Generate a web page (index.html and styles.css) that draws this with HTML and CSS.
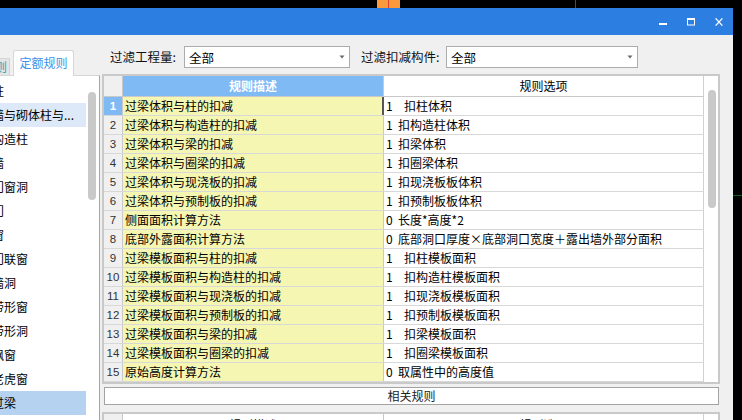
FILE: index.html
```html
<!DOCTYPE html>
<html lang="zh">
<head>
<meta charset="utf-8">
<title>规则</title>
<link rel="stylesheet" href="styles.css">
</head>
<body>
<div class="screen">
  <div class="topbar"><span class="marker"></span><span class="gline"></span></div>
  <div class="main">
    <div class="window">
      <div class="titlebar">
        <div class="ctl"><svg viewBox="0 0 8 8"><rect x="0" y="5" width="8" height="2" fill="#fff"/></svg></div>
        <div class="ctl"><svg viewBox="0 0 8 8"><rect x="0.5" y="0.5" width="7" height="6.5" fill="none" stroke="#fff"/><rect x="0" y="0" width="8" height="2" fill="#fff"/></svg></div>
        <div class="ctl"><svg viewBox="0 0 8 8"><path d="M0.6 0.4L7.4 7.6M7.4 0.4L0.6 7.6" stroke="#fff" stroke-width="1.3" fill="none"/></svg></div>
      </div>
      <div class="content">
        <div class="leftcol">
          <div class="tabs">
            <div class="tab-ghost"><span>则</span></div>
            <div class="tab-active">定额规则</div>
          </div>
          <div class="panel">
            <div class="tree">
              <ul>
                <li>柱</li>
                <li class="hover">墙与砌体柱与...</li>
                <li>构造柱</li>
                <li>墙</li>
                <li>门窗洞</li>
                <li>门</li>
                <li>窗</li>
                <li>门联窗</li>
                <li>墙洞</li>
                <li>带形窗</li>
                <li>带形洞</li>
                <li>飘窗</li>
                <li>老虎窗</li>
                <li class="sel">过梁</li>
              </ul>
            </div>
            <div class="vscroll"><div class="thumb"></div></div>
          </div>
        </div>
        <div class="rightcol">
          <div class="filters">
            <span class="flabel l1">过滤工程量:</span>
            <div class="combo c1"><span>全部</span><svg class="arrow" viewBox="0 0 6 4"><path d="M0.5 0.5H5.5L3 3.5Z" fill="#6a6a6a"/></svg></div>
            <span class="flabel l2">过滤扣减构件:</span>
            <div class="combo c2"><span>全部</span><svg class="arrow" viewBox="0 0 6 4"><path d="M0.5 0.5H5.5L3 3.5Z" fill="#6a6a6a"/></svg></div>
          </div>
          <div class="grid">
            <div class="gbody">
              <div class="hrow"><div class="hnum"></div><div class="hdesc">规则描述</div><div class="hopt">规则选项</div></div>
              <div class="row"><div class="num cur">1</div><div class="desc focus">过梁体积与柱的扣减</div><div class="opt"><span class="code w">1</span>扣柱体积</div></div>
              <div class="row"><div class="num">2</div><div class="desc">过梁体积与构造柱的扣减</div><div class="opt"><span class="code">1</span>扣构造柱体积</div></div>
              <div class="row"><div class="num">3</div><div class="desc">过梁体积与梁的扣减</div><div class="opt"><span class="code">1</span>扣梁体积</div></div>
              <div class="row"><div class="num">4</div><div class="desc">过梁体积与圈梁的扣减</div><div class="opt"><span class="code">1</span>扣圈梁体积</div></div>
              <div class="row"><div class="num">5</div><div class="desc">过梁体积与现浇板的扣减</div><div class="opt"><span class="code">1</span>扣现浇板板体积</div></div>
              <div class="row"><div class="num">6</div><div class="desc">过梁体积与预制板的扣减</div><div class="opt"><span class="code">1</span>扣预制板板体积</div></div>
              <div class="row"><div class="num">7</div><div class="desc">侧面面积计算方法</div><div class="opt"><span class="code">0</span>长度*高度*2</div></div>
              <div class="row"><div class="num">8</div><div class="desc">底部外露面积计算方法</div><div class="opt"><span class="code">0</span>底部洞口厚度×底部洞口宽度＋露出墙外部分面积</div></div>
              <div class="row"><div class="num">9</div><div class="desc">过梁模板面积与柱的扣减</div><div class="opt"><span class="code w">1</span>扣柱模板面积</div></div>
              <div class="row"><div class="num">10</div><div class="desc">过梁模板面积与构造柱的扣减</div><div class="opt"><span class="code w">1</span>扣构造柱模板面积</div></div>
              <div class="row"><div class="num">11</div><div class="desc">过梁模板面积与现浇板的扣减</div><div class="opt"><span class="code w">1</span>扣现浇板模板面积</div></div>
              <div class="row"><div class="num">12</div><div class="desc">过梁模板面积与预制板的扣减</div><div class="opt"><span class="code w">1</span>扣预制板模板面积</div></div>
              <div class="row"><div class="num">13</div><div class="desc">过梁模板面积与梁的扣减</div><div class="opt"><span class="code w">1</span>扣梁模板面积</div></div>
              <div class="row"><div class="num">14</div><div class="desc">过梁模板面积与圈梁的扣减</div><div class="opt"><span class="code w">1</span>扣圈梁模板面积</div></div>
              <div class="row"><div class="num">15</div><div class="desc">原始高度计算方法</div><div class="opt"><span class="code">0</span>取属性中的高度值</div></div>
            </div>
            <div class="gscroll"><div class="thumb"></div></div>
          </div>
          <div class="related">相关规则</div>
          <div class="grid grid2">
            <div class="gbody">
              <div class="hrow"><div class="hnum"></div><div class="hdesc plain">规则描述</div><div class="hopt">规则选项</div></div>
            </div>
            <div class="gscroll"></div>
          </div>
        </div>
      </div>
    </div>
    <div class="edge"><span class="eline"></span></div>
  </div>
</div>
</body>
</html>
```

FILE: styles.css
```css
* { box-sizing: border-box; }
html, body { margin: 0; padding: 0; }
body {
  background: #000;
  font-family: "Noto Sans CJK SC", sans-serif;
  font-size: 12px;
  color: #000;
}
.screen {
  width: 742px;
  height: 420px;
  overflow: hidden;
  display: flex;
  flex-direction: column;
  background: #000;
}
.topbar { height: 8px; flex: none; display: flex; padding-left: 377px; }
.marker {
  width: 23px; height: 8px;
  background: linear-gradient(to right, #fb9a3c 0 11px, #e2452b 11px 12px, #fb9a3c 12px);
}
.gline { width: 1px; height: 8px; margin-left: 175px; background: #1c6e1c; }
.main { flex: 1; display: flex; min-height: 0; }
.window {
  width: 733px; flex: none;
  background: #f0f0f0;
  display: flex; flex-direction: column;
  overflow: hidden;
}
.edge { flex: 1; padding-top: 187px; }
.eline { display: block; height: 1px; background: #13601a; }

.titlebar {
  height: 27px; flex: none;
  background: #2c7fe0;
  display: flex; justify-content: flex-end;
}
.ctl { width: 28px; display: flex; align-items: center; justify-content: center; }
.ctl svg { width: 8px; height: 8px; display: block; }

.content { flex: 1; display: flex; min-height: 0; overflow: hidden; }

.leftcol { width: 100px; flex: none; display: flex; flex-direction: column; }
.tabs { height: 40px; flex: none; display: flex; align-items: flex-end; gap: 3px; }
.tab-ghost {
  width: 10px; height: 17px;
  background: #e4e4e4;
  border-top: 1px solid #d4d4d4; border-right: 1px solid #d4d4d4;
  overflow: hidden;
  color: #2aa7b8; font-size: 12px; line-height: 15px;
}
.tab-ghost span { display: block; margin-left: -5px; }
.tab-active {
  position: relative;
  width: 61px; height: 26px; margin-bottom: -1px;
  background: #fff;
  border: 1px solid #d6d6d6; border-bottom: none;
  border-radius: 3px 3px 0 0;
  color: #3d8fe8; font-size: 12px; line-height: 24px; text-align: center;
}
.panel {
  flex: 1; min-height: 0;
  background: #fff;
  border-top: 1px solid #d6d6d6;
  border-right: 1px solid #a5a5a5;
  display: flex;
}
.tree { width: 86px; flex: none; overflow: hidden; padding-top: 3px; }
.tree ul { list-style: none; margin: 0 0 0 -8px; padding: 0; }
.tree li {
  width: 94px; height: 24px; line-height: 24px;
  white-space: nowrap; overflow: hidden;
  font-size: 12px; color: #000;
}
.tree li.hover { background: #dde9f8; }
.tree li.sel { background: #b5d2f0; }
.vscroll { flex: 1; }
.thumb { width: 8px; background: #c9c9c9; border-radius: 4px; }
.vscroll .thumb { height: 108px; margin: 16px 0 0 2px; }

.rightcol { width: 618px; flex: none; margin-left: 2px; display: flex; flex-direction: column; }
.filters { height: 39px; flex: none; display: flex; align-items: center; padding-top: 5px; }
.flabel { font-size: 12.5px; line-height: 20px; color: #111; white-space: nowrap; }
.l1 { margin-left: 8px; width: 74px; }
.l2 { margin-left: 11px; width: 85px; }
.combo {
  height: 22px;
  border: 1px solid #acacac;
  background: #fff;
  display: flex; align-items: center;
  padding-left: 4px;
  font-size: 12.5px; color: #000;
}
.c1 { width: 166px; }
.c2 { width: 192px; }
.arrow { width: 6px; height: 4px; margin-left: auto; margin-right: 4px; display: block; }

.grid {
  height: 310px; flex: none;
  border: 2px solid #c9c9c9;
  background: #fff;
  display: flex;
}
.gbody { width: 600px; flex: none; }
.gscroll { flex: 1; }
.gscroll .thumb { height: 118px; margin: 14px 0 0 4px; }
.hrow { display: flex; height: 21px; border-bottom: 1px solid #c9c9c9; }
.hnum { width: 19px; flex: none; background: #f0f0f0; border-right: 1px solid #c9c9c9; }
.hdesc {
  width: 261px; flex: none;
  background: #7fbaf5; border-right: 1px solid #c9c9c9;
  color: #fff; font-weight: bold; text-align: center; line-height: 20px;
}
.hdesc.plain { background: #fff; color: #000; font-weight: normal; }
.hopt {
  width: 320px; flex: none;
  border-right: 1px solid #d0d0d0;
  text-align: center; line-height: 20px; color: #000;
}
.row { display: flex; height: 19px; border-bottom: 1px solid #d8d8d8; }
.num {
  width: 19px; flex: none;
  background: #f0f0f0; border-right: 1px solid #c9c9c9;
  text-align: center;
  font-family: "Liberation Sans", sans-serif; font-size: 11.5px;
  line-height: 18px; color: #333;
}
.num.cur { background: #7fbaf5; color: #fff; font-weight: bold; }
.desc {
  width: 261px; flex: none;
  background: #f6f6b3; border-right: 1px solid #c9c9c9;
  padding-left: 2px; line-height: 18px; white-space: nowrap;
}
.desc.focus { border-right-color: #555; box-shadow: inset -1px 0 0 #555; }
.opt {
  width: 320px; flex: none;
  border-right: 1px solid #d0d0d0;
  padding-left: 2px; line-height: 18px; white-space: nowrap;
}
.code { display: inline-block; width: 12px; }
.code.w { width: 18px; }

.related {
  flex: none;
  margin: 3px 0 0 2px;
  width: 615px; height: 18px;
  border: 1px solid #a3a3a3;
  background: #fff;
  text-align: center; line-height: 16px; font-size: 12px; color: #222;
}
.grid2 { height: 40px; margin-top: 7px; }
.grid2 .hdesc, .grid2 .hopt { line-height: 22px; }
```
